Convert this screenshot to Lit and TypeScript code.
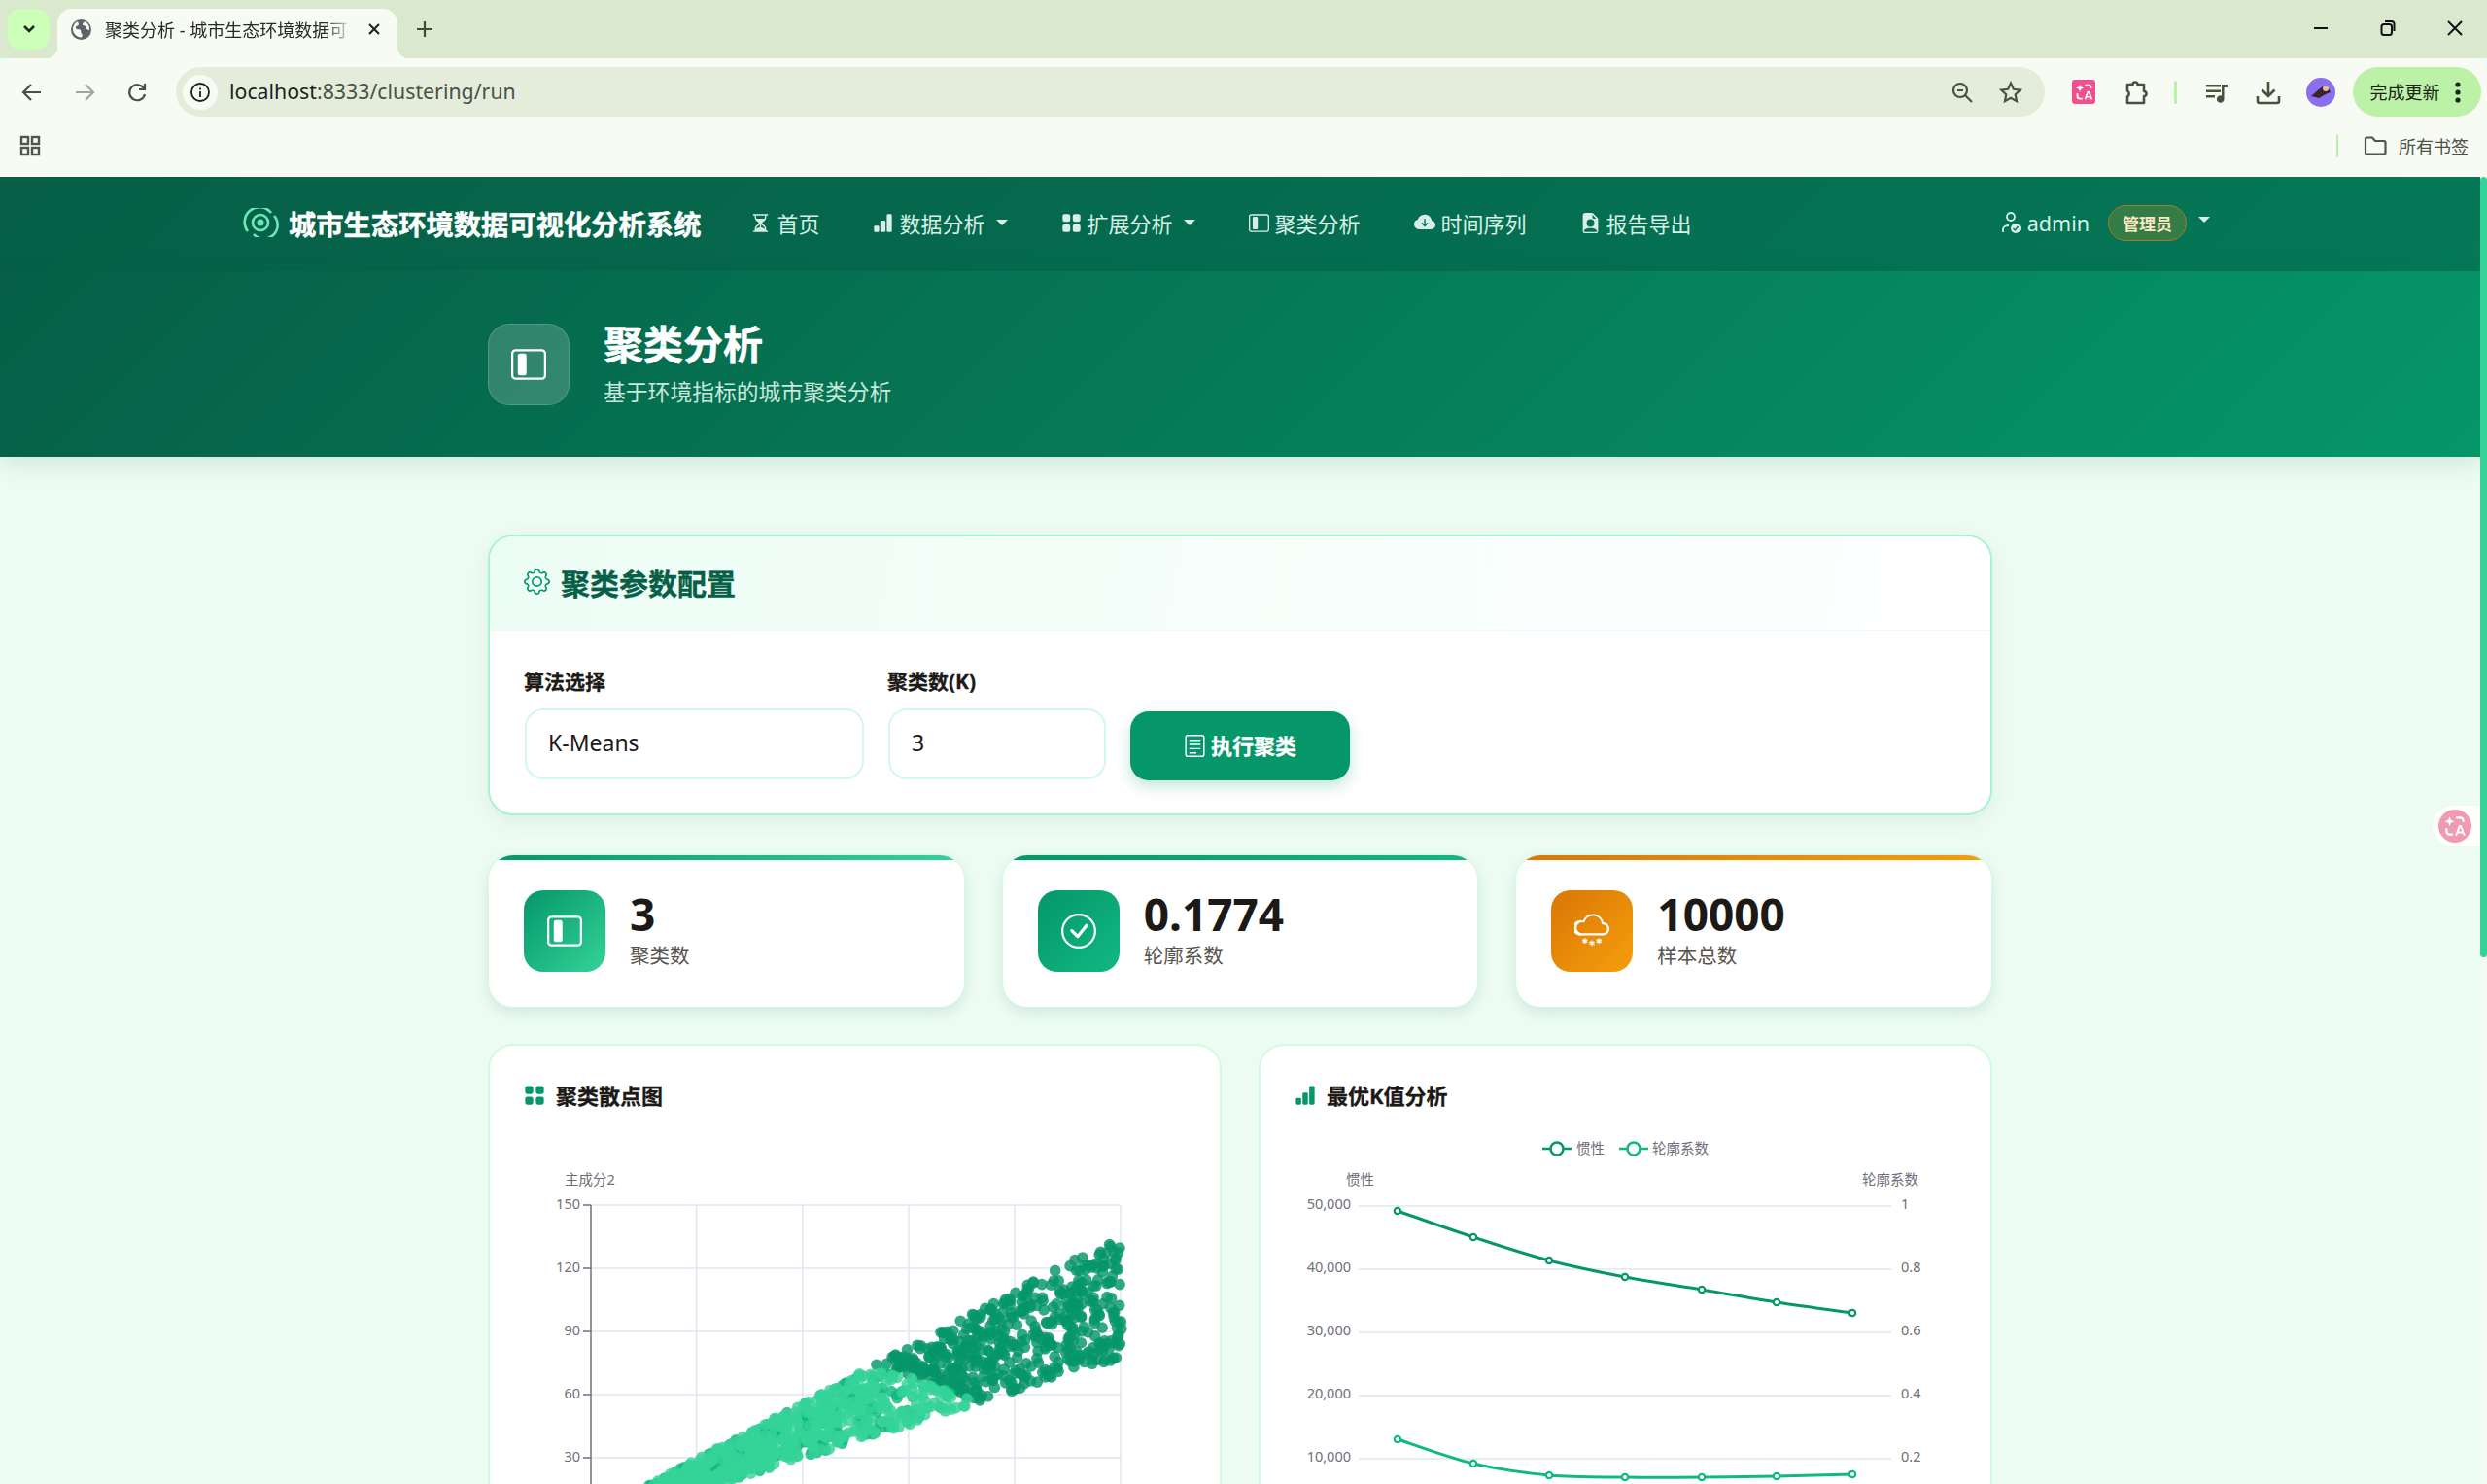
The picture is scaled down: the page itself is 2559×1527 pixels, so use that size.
import { LitElement, html, css, svg } from 'lit';
import { customElement } from 'lit/decorators.js';

const SIDEBAR = svg`<path d="M14 2a1 1 0 0 1 1 1v10a1 1 0 0 1-1 1H2a1 1 0 0 1-1-1V3a1 1 0 0 1 1-1zM2 1a2 2 0 0 0-2 2v10a2 2 0 0 0 2 2h12a2 2 0 0 0 2-2V3a2 2 0 0 0-2-2z"/><path d="M3 4a1 1 0 0 1 1-1h2a1 1 0 0 1 1 1v8a1 1 0 0 1-1 1H4a1 1 0 0 1-1-1z"/>`;
const HOURGLASS = svg`<path d="M2.5 15a.5.5 0 1 1 0-1h1v-1a4.5 4.5 0 0 1 2.557-4.06c.29-.139.443-.377.443-.59v-.7c0-.213-.154-.451-.443-.59A4.5 4.5 0 0 1 3.5 3V2h-1a.5.5 0 0 1 0-1h11a.5.5 0 0 1 0 1h-1v1a4.5 4.5 0 0 1-2.557 4.06c-.29.139-.443.377-.443.59v.7c0 .213.154.451.443.59A4.5 4.5 0 0 1 12.5 13v1h1a.5.5 0 0 1 0 1zm2-13v1c0 .537.12 1.045.337 1.5h6.326c.216-.455.337-.963.337-1.5V2zm3 6.35c0 .701-.478 1.236-1.011 1.492A3.5 3.5 0 0 0 4.5 13s.866-1.299 3-1.48zm1 0v3.17c2.134.181 3 1.48 3 1.48a3.5 3.5 0 0 0-1.989-3.158C8.978 9.586 8.5 9.052 8.5 8.351z"/>`;
const BARS = svg`<path d="M1 11a1 1 0 0 1 1-1h2a1 1 0 0 1 1 1v3a1 1 0 0 1-1 1H2a1 1 0 0 1-1-1zm5-4a1 1 0 0 1 1-1h2a1 1 0 0 1 1 1v7a1 1 0 0 1-1 1H7a1 1 0 0 1-1-1zm5-5a1 1 0 0 1 1-1h2a1 1 0 0 1 1 1v12a1 1 0 0 1-1 1h-2a1 1 0 0 1-1-1z"/>`;
const GRID = svg`<path d="M1 2.5A1.5 1.5 0 0 1 2.5 1h3A1.5 1.5 0 0 1 7 2.5v3A1.5 1.5 0 0 1 5.5 7h-3A1.5 1.5 0 0 1 1 5.5zm8 0A1.5 1.5 0 0 1 10.5 1h3A1.5 1.5 0 0 1 15 2.5v3A1.5 1.5 0 0 1 13.5 7h-3A1.5 1.5 0 0 1 9 5.5zm-8 8A1.5 1.5 0 0 1 2.5 9h3A1.5 1.5 0 0 1 7 10.5v3A1.5 1.5 0 0 1 5.5 15h-3A1.5 1.5 0 0 1 1 13.5zm8 0A1.5 1.5 0 0 1 10.5 9h3a1.5 1.5 0 0 1 1.5 1.5v3a1.5 1.5 0 0 1-1.5 1.5h-3A1.5 1.5 0 0 1 9 13.5z"/>`;
const CLOUD_DOWN = svg`<path d="M8 2a5.53 5.53 0 0 0-3.594 1.342c-.766.66-1.321 1.52-1.464 2.383C1.266 6.095 0 7.555 0 9.318 0 11.366 1.708 13 3.781 13h8.906C14.502 13 16 11.57 16 9.773c0-1.636-1.242-2.969-2.834-3.194C12.923 3.999 10.69 2 8 2m2.354 6.854-2 2a.5.5 0 0 1-.708 0l-2-2a.5.5 0 1 1 .708-.708L7.5 9.293V5.5a.5.5 0 0 1 1 0v3.793l1.146-1.147a.5.5 0 0 1 .708.708"/>`;
const FILE_PERSON = svg`<path d="M9.293 0H4a2 2 0 0 0-2 2v12a2 2 0 0 0 2 2h8a2 2 0 0 0 2-2V4.707A1 1 0 0 0 13.707 4L10 .293A1 1 0 0 0 9.293 0M9.5 3.5v-2l3 3h-2a1 1 0 0 1-1-1M11 8a3 3 0 1 1-6 0 3 3 0 0 1 6 0m2 5.755V14a1 1 0 0 1-1 1H4a1 1 0 0 1-1-1v-.245S4 12 8 12s5 1.755 5 1.755"/>`;
const GEAR = svg`<path d="M8 4.754a3.246 3.246 0 1 0 0 6.492 3.246 3.246 0 0 0 0-6.492M5.754 8a2.246 2.246 0 1 1 4.492 0 2.246 2.246 0 0 1-4.492 0"/><path d="M9.796 1.343c-.527-1.79-3.065-1.79-3.592 0l-.094.319a.873.873 0 0 1-1.255.52l-.292-.16c-1.64-.892-3.433.902-2.54 2.541l.159.292a.873.873 0 0 1-.52 1.255l-.319.094c-1.79.527-1.79 3.065 0 3.592l.319.094a.873.873 0 0 1 .52 1.255l-.16.292c-.892 1.64.901 3.434 2.541 2.54l.292-.159a.873.873 0 0 1 1.255.52l.094.319c.527 1.79 3.065 1.79 3.592 0l.094-.319a.873.873 0 0 1 1.255-.52l.292.16c1.64.893 3.434-.902 2.54-2.541l-.159-.292a.873.873 0 0 1 .52-1.255l.319-.094c1.79-.527 1.79-3.065 0-3.592l-.319-.094a.873.873 0 0 1-.52-1.255l.16-.292c.893-1.64-.902-3.433-2.541-2.54l-.292.159a.873.873 0 0 1-1.255-.52zm-2.633.283c.246-.835 1.428-.835 1.674 0l.094.319a1.873 1.873 0 0 0 2.693 1.115l.291-.16c.764-.415 1.6.42 1.184 1.185l-.159.292a1.873 1.873 0 0 0 1.116 2.692l.318.094c.835.246.835 1.428 0 1.674l-.319.094a1.873 1.873 0 0 0-1.115 2.693l.16.291c.415.764-.42 1.6-1.185 1.184l-.291-.159a1.873 1.873 0 0 0-2.693 1.116l-.094.318c-.246.835-1.428.835-1.674 0l-.094-.319a1.873 1.873 0 0 0-2.692-1.115l-.292.16c-.764.415-1.6-.42-1.184-1.185l.159-.291A1.873 1.873 0 0 0 1.945 8.93l-.319-.094c-.835-.246-.835-1.428 0-1.674l.319-.094A1.873 1.873 0 0 0 3.06 4.377l-.16-.292c-.415-.764.42-1.6 1.185-1.184l.292.159a1.873 1.873 0 0 0 2.692-1.115z"/>`;
const CHECK_CIRCLE = svg`<path d="M8 15A7 7 0 1 1 8 1a7 7 0 0 1 0 14m0 1A8 8 0 1 0 8 0a8 8 0 0 0 0 16"/><path d="M10.97 4.97a.235.235 0 0 0-.02.022L7.477 9.417 5.384 7.323a.75.75 0 0 0-1.06 1.06L6.97 11.03a.75.75 0 0 0 1.079-.02l3.992-4.99a.75.75 0 0 0-1.071-1.05"/>`;
const CLOUD_SNOW = svg`<path d="M13.405 4.277a5.001 5.001 0 0 0-9.499-1.004A3.5 3.5 0 1 0 3.5 10H13a3 3 0 0 0 .405-5.973M8.5 1a4 4 0 0 1 3.976 3.555.5.5 0 0 0 .5.445H13a2 2 0 0 1-.001 4H3.5a2.5 2.5 0 1 1 .605-4.926.5.5 0 0 0 .596-.329A4 4 0 0 1 8.5 1"/><path d="M4.5 11.2v.8l-.7-.4-.3.5.7.4-.7.4.3.5.7-.4v.8h.6v-.8l.7.4.3-.5-.7-.4.7-.4-.3-.5-.7.4v-.8zM7.7 12.2v.8l-.7-.4-.3.5.7.4-.7.4.3.5.7-.4v.8h.6v-.8l.7.4.3-.5-.7-.4.7-.4-.3-.5-.7.4v-.8zM10.9 11.2v.8l-.7-.4-.3.5.7.4-.7.4.3.5.7-.4v.8h.6v-.8l.7.4.3-.5-.7-.4.7-.4-.3-.5-.7.4v-.8z"/>`;
const DOC_LINES = svg`<path d="M3 0h10a2 2 0 0 1 2 2v12a2 2 0 0 1-2 2H3a2 2 0 0 1-2-2V2a2 2 0 0 1 2-2m0 1a1 1 0 0 0-1 1v12a1 1 0 0 0 1 1h10a1 1 0 0 0 1-1V2a1 1 0 0 0-1-1z"/><path d="M4 3.5h8v1H4zM4 6.5h8v1H4zM4 9.5h8v1H4zM4 12.5h5v1H4z"/>`;

function icon(body: unknown, size: number) {
  return html`<svg class="ic" width=${size} height=${size} viewBox="0 0 16 16" fill="currentColor">${body}</svg>`;
}

function translateGlyph(size: number) {
  return html`<svg width=${size} height=${size} viewBox="0 0 24 24" fill="none" stroke="#fff" stroke-width="2">
    <path d="M7 3l1.3 3.2L11.5 7.5 8.3 8.8 7 12 5.7 8.8 2.5 7.5l3.2-1.3z" fill="#fff" stroke="none" />
    <path d="M13 4h4a3 3 0 0 1 3 3v1" />
    <path d="M4 14v3a3 3 0 0 0 3 3h3" />
    <path d="M13 21l3.5-9h1l3.5 9M14.5 18h5" stroke-width="1.8" />
  </svg>`;
}

@customElement('browser-bar')
export class BrowserBar extends LitElement {
  static styles = css`
    :host {
      display: block;
      font-family: 'Noto Sans', 'Noto Sans CJK SC', sans-serif;
      color: #1f2a1c;
    }
    .strip {
      height: 60px;
      background: #dae8ce;
      display: flex;
      align-items: flex-end;
      position: relative;
    }
    .tab-list {
      width: 43px;
      height: 42px;
      margin: 0 8px 9px 8px;
      border-radius: 13px;
      background: #ccffb8;
      display: flex;
      align-items: center;
      justify-content: center;
    }
    .tab {
      position: relative;
      width: 350px;
      height: 51px;
      background: #f8fbf3;
      border-radius: 15px 15px 0 0;
      display: flex;
      align-items: center;
      box-sizing: border-box;
      padding: 0 17px 9px 14px;
      gap: 14px;
    }
    .tab::before,
    .tab::after {
      content: '';
      position: absolute;
      bottom: 0;
      width: 12px;
      height: 12px;
    }
    .tab::before {
      left: -12px;
      background: radial-gradient(circle at 0 0, transparent 12px, #f8fbf3 12.5px);
    }
    .tab::after {
      right: -12px;
      background: radial-gradient(circle at 100% 0, transparent 12px, #f8fbf3 12.5px);
    }
    .tab-title {
      flex: 1;
      font-size: 18px;
      white-space: nowrap;
      overflow: hidden;
      color: #262b24;
      -webkit-mask-image: linear-gradient(90deg, #000 88%, transparent);
      mask-image: linear-gradient(90deg, #000 88%, transparent);
    }
    .plus {
      margin: 0 0 9px 19px;
      height: 42px;
      display: flex;
      align-items: center;
    }
    .win {
      margin-left: auto;
      display: flex;
      align-self: flex-start;
      gap: 49px;
      padding: 19px 23px 0 0;
    }
    .toolbar {
      height: 60px;
      background: #f8fbf3;
      display: flex;
      align-items: flex-start;
      padding-top: 9px;
      box-sizing: border-box;
      border-radius: 14px 14px 0 0;
    }
    .nav-btns {
      width: 181px;
      height: 51px;
      display: flex;
      align-items: center;
      padding-left: 21px;
      gap: 30px;
      box-sizing: border-box;
    }
    .omni {
      width: 1923px;
      height: 51px;
      border-radius: 26px;
      background: #e4eddc;
      display: flex;
      align-items: center;
      padding: 0 23px 0 7px;
      box-sizing: border-box;
    }
    .info {
      width: 36px;
      height: 36px;
      border-radius: 50%;
      background: #f8fbf3;
      display: flex;
      align-items: center;
      justify-content: center;
      margin-right: 12px;
    }
    .url {
      font-size: 21.3px;
      color: #4a5146;
      flex: 1;
      padding-bottom: 2px;
    }
    .url b {
      font-weight: 400;
      color: #1c1f1a;
    }
    .omni-end {
      display: flex;
      gap: 26px;
      align-items: center;
    }
    .actions {
      display: flex;
      align-items: center;
      height: 51px;
      flex: 1;
      padding-left: 28px;
    }
    .actions > :nth-child(2) {
      margin-left: 30px;
    }
    .actions > :nth-child(3) {
      margin-left: 27px;
    }
    .actions > :nth-child(4) {
      margin-left: 29px;
    }
    .actions > :nth-child(5) {
      margin-left: 28px;
    }
    .actions > :nth-child(6) {
      margin-left: 26px;
    }
    .actions > :nth-child(7) {
      margin-left: 18px;
    }
    .pink {
      width: 24px;
      height: 25px;
      border-radius: 3px;
      background: #f0508f;
      display: flex;
      align-items: center;
      justify-content: center;
    }
    .sep {
      width: 2.5px;
      height: 24px;
      border-radius: 2px;
      background: #bcefa8;
    }
    .avatar {
      width: 30px;
      height: 30px;
      border-radius: 50%;
      background: #8a70ee;
      display: flex;
      align-items: center;
      justify-content: center;
    }
    .update {
      width: 132px;
      height: 51px;
      border-radius: 26px;
      background: #bcf1a8;
      display: flex;
      align-items: center;
      box-sizing: border-box;
      padding-left: 18px;
      font-size: 18px;
      color: #1a2416;
      gap: 15px;
    }
    .update span {
      padding-bottom: 2px;
    }
    .marks {
      height: 62px;
      background: #f8fbf3;
      display: flex;
      align-items: center;
      padding: 0 19px 2px 20px;
      box-sizing: border-box;
      font-size: 18px;
      color: #4b5049;
    }
    .marks .sep {
      margin-left: auto;
      margin-right: 26px;
    }
    .folder {
      margin-right: 12px;
      display: flex;
    }
    svg {
      display: block;
      flex: none;
    }
  `;

  render() {
    const stroke = '#46543f';
    return html`
      <div class="strip">
        <div class="tab-list">
          <svg width="14" height="10" viewBox="0 0 14 10" fill="none" stroke="#1f2a1c" stroke-width="2.6"><path d="M2 2l5 5 5-5" /></svg>
        </div>
        <div class="tab">
          <svg width="21" height="21" viewBox="0 0 16 16" fill="#5f6368"><path d="M8 0a8 8 0 1 0 0 16A8 8 0 0 0 8 0M5 1.800c.7.6 1.200 1.400 1 2.200-.2.900-1.400.900-2 1.600-.6.700-.2 1.600.6 2 .9.400 2-.2 2.800.5.700.6.300 1.600.6 2.500.3.800 1.200 1.300 1 2.200-.1.500-.4 1-.8 1.300A6.500 6.500 0 0 1 2 5.200 6.500 6.500 0 0 1 5 1.800m6-.1a6.500 6.500 0 0 1 3.300 7c-.7-.5-1.600-.8-2.200-1.500-.5-.6-.2-1.500-.8-2-.6-.6-1.800-.3-2.100-1.100-.3-.8.600-1.300 1-2 .2-.200.500-.300.800-.400z" /></svg>
          <span class="tab-title">聚类分析 - 城市生态环境数据可</span>
          <svg width="14" height="14" viewBox="0 0 14 14" stroke="#1f2a1c" stroke-width="2.2"><path d="M2 2l10 10M12 2L2 12" /></svg>
        </div>
        <div class="plus">
          <svg width="18" height="18" viewBox="0 0 18 18" stroke="#3f4a3a" stroke-width="2.2"><path d="M9 1v16M1 9h16" /></svg>
        </div>
        <div class="win">
          <svg width="20" height="20" viewBox="0 0 20 20" stroke="#111" stroke-width="2"><path d="M3 10h14" /></svg>
          <svg width="20" height="20" viewBox="0 0 20 20" fill="none" stroke="#111" stroke-width="2"><rect x="3.500" y="6" width="10.500" height="11" rx="2.500" /><path d="M7 3h6.500A3 3 0 0 1 16.500 6v7" /></svg>
          <svg width="20" height="20" viewBox="0 0 20 20" stroke="#111" stroke-width="2"><path d="M3 3l14 14M17 3L3 17" /></svg>
        </div>
      </div>
      <div class="toolbar">
        <div class="nav-btns">
          <svg width="24" height="24" viewBox="0 0 24 24" fill="none" stroke=${stroke} stroke-width="2.200"><path d="M21 12H4M11 4l-8 8 8 8" /></svg>
          <svg width="24" height="24" viewBox="0 0 24 24" fill="none" stroke="#a0a89b" stroke-width="2.200"><path d="M3 12h17M13 4l8 8-8 8" /></svg>
          <svg width="24" height="24" viewBox="0 0 24 24" fill="none" stroke=${stroke} stroke-width="2.200"><path d="M19 8a8 8 0 1 0 1 6" /><path d="M20 3v6h-6" /></svg>
        </div>
        <div class="omni">
          <div class="info">
            <svg width="22" height="22" viewBox="0 0 22 22" fill="none" stroke="#1c1f1a" stroke-width="1.800"><circle cx="11" cy="11" r="9" /><path d="M11 10v6M11 6.500v2" /></svg>
          </div>
          <span class="url"><b>localhost</b>:8333/clustering/run</span>
          <div class="omni-end">
            <svg width="24" height="24" viewBox="0 0 24 24" fill="none" stroke=${stroke} stroke-width="2.200"><circle cx="10" cy="10" r="7" /><path d="M15 15l7 7M7 10h6" /></svg>
            <svg width="24" height="24" viewBox="0 0 24 24" fill="none" stroke=${stroke} stroke-width="2.200"><path d="M12 2.500l2.900 6.300 6.800.8-5 4.700 1.300 6.800-6-3.400-6 3.400 1.300-6.800-5-4.700 6.800-.8z" /></svg>
          </div>
        </div>
        <div class="actions">
          <div class="pink">${translateGlyph(21)}</div>
          <svg width="24" height="28" viewBox="0 0 24 28" fill="none" stroke=${stroke} stroke-width="2.600"><path d="M3 6h5.500a2.500 2.500 0 0 1 5 0H20v7a2.500 2.500 0 0 1 0 5v7H3v-6.500a3.500 3.500 0 0 0 0-6z" stroke-linejoin="round" /></svg>
          <div class="sep"></div>
          <svg width="24" height="24" viewBox="0 0 24 24" fill=${stroke}><path d="M1 4h15v2.400H1zM1 9.500h15v2.400H1zM1 15h9v2.400H1zM17 4h6v3h-3.500v12a3.800 3.800 0 1 1-2.500-3.500z" /></svg>
          <svg width="26" height="26" viewBox="0 0 26 26" fill="none" stroke=${stroke} stroke-width="2.600"><path d="M13 2v15M6.500 10.500L13 17l6.500-6.500" /><path d="M2 17v5a2 2 0 0 0 2 2h18a2 2 0 0 0 2-2v-5" /></svg>
          <div class="avatar">
            <svg width="22" height="16" viewBox="0 0 22 16"><path d="M1 12l8-7 4-3 6 2 2 4-5 2-7 4z" fill="#3a2430" /><circle cx="16" cy="4" r="3" fill="#e8b9a8" /></svg>
          </div>
          <div class="update">
            <span>完成更新</span>
            <svg width="6" height="24" viewBox="0 0 6 24" fill="#1a2416"><circle cx="3" cy="4" r="2.600" /><circle cx="3" cy="12" r="2.600" /><circle cx="3" cy="20" r="2.600" /></svg>
          </div>
        </div>
      </div>
      <div class="marks">
        <svg width="22" height="22" viewBox="0 0 22 22" fill="none" stroke="#4f554b" stroke-width="2.400"><rect x="2" y="2" width="7" height="7" /><rect x="13" y="2" width="7" height="7" /><rect x="2" y="13" width="7" height="7" /><rect x="13" y="13" width="7" height="7" /></svg>
        <div class="sep"></div>
        <span class="folder"><svg width="24" height="20" viewBox="0 0 24 20" fill="none" stroke="#4f554b" stroke-width="2.200"><path d="M2 3a1.500 1.500 0 0 1 1.500-1.500H9L12 5h9a1.500 1.500 0 0 1 1.500 1.500V17a1.500 1.500 0 0 1-1.500 1.500H3.500A1.500 1.500 0 0 1 2 17z" /></svg></span>
        <span>所有书签</span>
      </div>
    `;
  }
}

// small seeded generator so the cloud of points stays the same on every load
function rng(seed: number) {
  return () => {
    seed = (seed + 0x6d2b79f5) | 0;
    let t = Math.imul(seed ^ (seed >>> 15), 1 | seed);
    t = (t + Math.imul(t ^ (t >>> 7), 61 | t)) ^ t;
    return ((t ^ (t >>> 14)) >>> 0) / 4294967296;
  };
}

function clusterPoints() {
  const r = rng(42);
  const dark: number[][] = [];
  const mid: number[][] = [];
  const light: number[][] = [];
  for (let i = 0; i < 1250; i++) {
    const x = 668 + 486 * Math.pow(r(), 1.1);
    const top = 1501 - 0.527 * (x - 718);
    const bottom = 1517 - 0.312 * (x - 771);
    const y = top + (bottom - top) * r();
    const edge = 1400 + (x - 885) * 0.34;
    if (y < edge) {
      dark.push([x, y]);
    } else if (r() < 0.33 || x > 995) {
      mid.push([x, y]);
    } else {
      light.push([x, y]);
    }
  }
  return { dark, mid, light };
}

function smooth(pts: number[][]) {
  let d = `M${pts[0][0]} ${pts[0][1]}`;
  for (let i = 0; i < pts.length - 1; i++) {
    const p0 = pts[Math.max(i - 1, 0)];
    const p1 = pts[i];
    const p2 = pts[i + 1];
    const p3 = pts[Math.min(i + 2, pts.length - 1)];
    const c1x = p1[0] + (p2[0] - p0[0]) / 6;
    const c1y = p1[1] + (p2[1] - p0[1]) / 6;
    const c2x = p2[0] - (p3[0] - p1[0]) / 6;
    const c2y = p2[1] - (p3[1] - p1[1]) / 6;
    d += `C${c1x} ${c1y} ${c2x} ${c2y} ${p2[0]} ${p2[1]}`;
  }
  return d;
}

const GRID_Y = [1240, 1305, 1370, 1435, 1500, 1565];

@customElement('app-root')
export class AppRoot extends LitElement {
  static styles = css`
    :host {
      display: flex;
      flex-direction: column;
      height: 1527px;
      overflow: hidden;
      position: relative;
      font-family: 'Noto Sans', 'Noto Sans CJK SC', sans-serif;
      color: #1c1917;
      background: #ecfdf5;
    }
    .viewport {
      flex: 1;
      display: flex;
      min-height: 0;
    }
    .page {
      flex: 1;
      min-width: 0;
      overflow: hidden;
      background: #edfcf3;
    }
    .scroll {
      width: 7px;
      background: #f2fbf6;
    }
    .thumb {
      height: 803px;
      border-radius: 4px;
      background: #34d399;
    }
    .float {
      position: absolute;
      left: 2503px;
      top: 829px;
      width: 49px;
      height: 42px;
      border-radius: 21px 0 0 21px;
      background: #fff;
      display: flex;
      align-items: center;
      padding-left: 6px;
      box-sizing: border-box;
    }
    .float span {
      width: 34px;
      height: 34px;
      border-radius: 50%;
      background: #ef9bb3;
      display: flex;
      align-items: center;
      justify-content: center;
    }
    nav {
      height: 97px;
      box-sizing: border-box;
      background: linear-gradient(135deg, #065f46, #047857);
      display: flex;
      align-items: center;
      padding: 0 278px 3px 249px;
      box-shadow: 0 2px 8px rgba(6, 95, 70, 0.2);
      position: relative;
      color: #d7efe6;
    }
    .brand {
      display: flex;
      align-items: center;
      gap: 10px;
      font-size: 28.3px;
      font-weight: 700;
      color: #fff;
      margin-right: 51px;
      white-space: nowrap;
      -webkit-text-stroke: 0.5px #fff;
    }
    .links {
      display: flex;
      align-items: center;
      gap: 55px;
      font-size: 22px;
    }
    .link {
      display: flex;
      align-items: center;
      gap: 6px;
      white-space: nowrap;
    }
    .caret {
      width: 0;
      height: 0;
      border-left: 6px solid transparent;
      border-right: 6px solid transparent;
      border-top: 6px solid #d7efe6;
      margin-left: 5px;
    }
    .user {
      margin-left: auto;
      display: flex;
      align-items: center;
      font-size: 21.5px;
    }
    .user .who {
      margin: 0 19px 0 6px;
    }
    .badge {
      width: 81px;
      height: 37px;
      box-sizing: border-box;
      border-radius: 19px;
      border: 1.500px solid #b4742c;
      background: rgba(245, 158, 11, 0.2);
      color: #fde8c4;
      font-size: 17px;
      font-weight: 700;
      display: flex;
      align-items: center;
      justify-content: center;
    }
    .user .caret {
      margin: -6px 0 0 12px;
    }
    .hero {
      height: 191px;
      background: linear-gradient(135deg, #065f46 0%, #059669 100%);
      box-shadow: 0 6px 24px rgba(6, 95, 70, 0.14);
      position: relative;
    }
    .wrap {
      width: 1548px;
      margin: 0 auto;
    }
    .hero .wrap {
      height: 100%;
      display: flex;
      align-items: center;
      gap: 35px;
      color: #fff;
    }
    .hero-ic {
      width: 84px;
      height: 84px;
      box-sizing: border-box;
      border-radius: 22px;
      background: rgba(255, 255, 255, 0.18);
      border: 1.500px solid rgba(255, 255, 255, 0.16);
      display: flex;
      align-items: center;
      justify-content: center;
    }
    h1 {
      margin: 0;
      font-size: 41px;
      line-height: 50px;
      font-weight: 700;
      -webkit-text-stroke: 0.6px #fff;
    }
    .hero p {
      margin: 9px 0 0;
      font-size: 22.8px;
      line-height: 32px;
      color: #c9e7dc;
    }
    .content {
      padding-top: 80px;
    }
    .cfg {
      height: 289px;
      box-sizing: border-box;
      border-radius: 26px;
      border: 2px solid #a7f3d0;
      background: #fff;
      overflow: hidden;
      box-shadow: 0 6px 20px rgba(6, 95, 70, 0.08);
    }
    .cfg-head {
      height: 97px;
      box-sizing: border-box;
      padding: 0 0 3px 35px;
      display: flex;
      align-items: center;
      gap: 11px;
      background: linear-gradient(100deg, #ecfdf5, #fff);
      border-bottom: 1px solid #eefbf4;
      color: #065f46;
      font-size: 30px;
      font-weight: 700;
      -webkit-text-stroke: 0.4px #065f46;
    }
    .cfg-head .ic {
      color: #059669;
      -webkit-text-stroke: 0;
    }
    .form {
      display: flex;
      align-items: flex-end;
      gap: 25px;
      padding: 36px 36px 0;
    }
    .field {
      display: flex;
      flex-direction: column;
      gap: 11px;
    }
    label {
      font-size: 21px;
      line-height: 33px;
      font-weight: 700;
      margin-left: -1px;
      -webkit-text-stroke: 0.3px #1c1917;
    }
    input {
      height: 73px;
      box-sizing: border-box;
      border-radius: 19px;
      border: 2.500px solid #d1fae5;
      background: #fff;
      padding: 0 22px 3px;
      font: 400 23px 'Noto Sans', 'Noto Sans CJK SC', sans-serif;
      color: #1c1917;
      outline: none;
    }
    .algo input {
      width: 349px;
    }
    .k input {
      width: 224px;
    }
    button {
      width: 226px;
      height: 71px;
      border: 0;
      border-radius: 19px;
      background: #059669;
      color: #fff;
      font: 700 22px 'Noto Sans', 'Noto Sans CJK SC', sans-serif;
      display: flex;
      align-items: center;
      justify-content: center;
      gap: 5px;
      box-shadow: 0 6px 16px rgba(5, 150, 105, 0.25);
      margin-bottom: -1px;
    }
    button span {
      padding-bottom: 3px;
      -webkit-text-stroke: 0.3px #fff;
    }
    .stats {
      display: grid;
      grid-template-columns: repeat(3, 1fr);
      gap: 38px;
      margin-top: 40px;
    }
    .stat {
      height: 158px;
      box-sizing: border-box;
      border-radius: 26px;
      background: #fff;
      border: 1.500px solid #d1fae5;
      display: flex;
      align-items: center;
      gap: 25px;
      padding-left: 36px;
      position: relative;
      overflow: hidden;
      box-shadow: 0 5px 14px rgba(6, 95, 70, 0.12);
    }
    .stat::before {
      content: '';
      position: absolute;
      left: 0;
      right: 0;
      top: 0;
      height: 5px;
      background: var(--bar);
    }
    .stat-ic {
      width: 84px;
      height: 84px;
      border-radius: 20px;
      color: #fff;
      display: flex;
      align-items: center;
      justify-content: center;
      background: var(--fill);
    }
    .stat-text {
      padding-bottom: 6px;
    }
    .val {
      font-size: 46px;
      line-height: 55px;
      font-weight: 700;
    }
    .lab {
      font-size: 20.500px;
      line-height: 30px;
      color: #57534e;
    }
    .charts {
      display: grid;
      grid-template-columns: repeat(2, 1fr);
      gap: 38px;
      margin-top: 37px;
    }
    .chart {
      height: 560px;
      box-sizing: border-box;
      border-radius: 26px;
      border: 2px solid #d1fae5;
      background: #fff;
    }
    .chart-title {
      display: flex;
      align-items: center;
      gap: 11px;
      height: 34px;
      margin: 34px 0 16px 35px;
      font-size: 22px;
      font-weight: 700;
      color: #1c1917;
    }
    .chart-title span {
      padding-bottom: 3px;
      -webkit-text-stroke: 0.3px #1c1917;
    }
    .chart-title .ic {
      color: #059669;
    }
    .chart > svg {
      display: block;
    }
    .chart text {
      font-family: 'Noto Sans', 'Noto Sans CJK SC', sans-serif;
      font-size: 14.500px;
      fill: #6e7079;
    }
  `;

  private points = clusterPoints();

  private scatter() {
    const xs = [608, 716.500, 826, 935, 1044, 1153];
    const { dark, mid, light } = this.points;
    const dots = (list: number[][], fill: string) =>
      list.map(p => svg`<circle cx=${p[0]} cy=${p[1]} r="5.800" fill=${fill} fill-opacity="0.82" />`);
    return html`<svg width="751" height="440" viewBox="504 1160 751 440">
      ${GRID_Y.map(y => svg`<line x1="608" x2="1153" y1=${y} y2=${y} stroke="#e0e6f1" stroke-width="1.500" />`)}
      ${xs.slice(1).map(x => svg`<line x1=${x} x2=${x} y1="1240" y2="1565" stroke="#e0e6f1" stroke-width="1.500" />`)}
      <line x1="608" x2="608" y1="1240" y2="1565" stroke="#6e7079" stroke-width="1.500" />
      ${GRID_Y.map(y => svg`<line x1="600" x2="608" y1=${y} y2=${y} stroke="#6e7079" stroke-width="1.500" />`)}
      ${['150', '120', '90', '60', '30'].map((t, i) => svg`<text x="597" y=${GRID_Y[i] + 4} text-anchor="end">${t}</text>`)}
      <text x="581" y="1219">主成分2</text>
      ${dots(dark, '#059669')}
      ${dots(mid, '#10b981')}
      ${dots(light, '#34d399')}
    </svg>`;
  }

  private kChart() {
    const xs = [1438, 1516, 1594, 1672, 1751, 1828, 1906];
    const inertia = [1246, 1273, 1297, 1314, 1327, 1340, 1351].map((y, i) => [xs[i], y]);
    const silhouette = [1481, 1506, 1518, 1520, 1520, 1519, 1517].map((y, i) => [xs[i], y]);
    const series = (pts: number[][], color: string) => svg`
      <path d=${smooth(pts)} fill="none" stroke=${color} stroke-width="3" />
      ${pts.map(p => svg`<circle cx=${p[0]} cy=${p[1]} r="3.200" fill="#fff" stroke=${color} stroke-width="2.200" />`)}`;
    const left = ['50,000', '40,000', '30,000', '20,000', '10,000'];
    const right = ['1', '0.8', '0.6', '0.4', '0.2'];
    const legend = (x: number, color: string) => svg`
      <path d="M${x} 1182h30" stroke=${color} stroke-width="2.500" />
      <circle cx=${x + 15} cy="1182" r="6.500" fill="#fff" stroke=${color} stroke-width="2.500" />`;
    return html`<svg width="751" height="440" viewBox="1297 1160 751 440">
      ${legend(1587, '#059669')}
      <text x="1622" y="1187">惯性</text>
      ${legend(1666, '#10b981')}
      <text x="1700" y="1187">轮廓系数</text>
      <text x="1385" y="1219">惯性</text>
      <text x="1916" y="1219">轮廓系数</text>
      ${GRID_Y.map(y => svg`<line x1="1398" x2="1946" y1=${y + 1} y2=${y + 1} stroke="#e0e6f1" stroke-width="1.500" />`)}
      ${left.map((t, i) => svg`<text x="1390" y=${GRID_Y[i] + 4} text-anchor="end">${t}</text>`)}
      ${right.map((t, i) => svg`<text x="1956" y=${GRID_Y[i] + 4}>${t}</text>`)}
      ${series(inertia, '#059669')}
      ${series(silhouette, '#10b981')}
    </svg>`;
  }

  render() {
    const stats = [
      { v: '3', l: '聚类数', i: SIDEBAR, bar: 'linear-gradient(90deg,#059669,#34d399)', fill: 'linear-gradient(135deg,#059669,#34d399)' },
      { v: '0.1774', l: '轮廓系数', i: CHECK_CIRCLE, bar: 'linear-gradient(90deg,#059669,#10b981)', fill: 'linear-gradient(135deg,#059669,#10b981)' },
      { v: '10000', l: '样本总数', i: CLOUD_SNOW, bar: 'linear-gradient(90deg,#d97706,#f59e0b)', fill: 'linear-gradient(135deg,#d97706,#f59e0b)' },
    ];
    return html`
      <browser-bar></browser-bar>
      <div class="viewport">
        <div class="page">
          <nav>
            <div class="brand">
              <svg width="38" height="30" viewBox="0 0 38 30" fill="none" stroke="#6ee7b7" stroke-width="2.600">
                <path d="M6 24A13 13 0 0 1 30 5" />
                <path d="M33 8A13 13 0 0 1 12 27" />
                <ellipse cx="19" cy="15" rx="8" ry="8" />
                <circle cx="19" cy="15" r="3.500" fill="#6ee7b7" stroke="none" />
              </svg>
              城市生态环境数据可视化分析系统
            </div>
            <div class="links">
              <span class="link">${icon(HOURGLASS, 21)}首页</span>
              <span class="link">${icon(BARS, 21)}数据分析<i class="caret"></i></span>
              <span class="link">${icon(GRID, 21)}扩展分析<i class="caret"></i></span>
              <span class="link">${icon(SIDEBAR, 21)}聚类分析</span>
              <span class="link">${icon(CLOUD_DOWN, 22)}时间序列</span>
              <span class="link">${icon(FILE_PERSON, 21)}报告导出</span>
            </div>
            <div class="user">
              <svg width="20" height="24" viewBox="0 0 20 24" fill="none" stroke="#d7efe6" stroke-width="1.800">
                <circle cx="9" cy="6" r="4" />
                <path d="M1 22v-3c0-2.500 3-4 6-4" />
                <circle cx="14" cy="18" r="5" fill="#d7efe6" stroke="none" />
                <path d="M11.500 18l2 2 3-4" stroke="#047857" stroke-width="1.400" />
              </svg>
              <span class="who">admin</span>
              <span class="badge">管理员</span>
              <i class="caret"></i>
            </div>
          </nav>
          <section class="hero">
            <div class="wrap">
              <div class="hero-ic">${icon(SIDEBAR, 36)}</div>
              <div>
                <h1>聚类分析</h1>
                <p>基于环境指标的城市聚类分析</p>
              </div>
            </div>
          </section>
          <div class="wrap content">
            <section class="cfg">
              <div class="cfg-head">${icon(GEAR, 27)}聚类参数配置</div>
              <div class="form">
                <div class="field algo">
                  <label>算法选择</label>
                  <input value="K-Means" readonly />
                </div>
                <div class="field k">
                  <label>聚类数(K)</label>
                  <input value="3" readonly />
                </div>
                <button>${icon(DOC_LINES, 23)}<span>执行聚类</span></button>
              </div>
            </section>
            <div class="stats">
              ${stats.map(
                s => html`<div class="stat" style="--bar:${s.bar};--fill:${s.fill}">
                  <div class="stat-ic">${icon(s.i, 36)}</div>
                  <div class="stat-text">
                    <div class="val">${s.v}</div>
                    <div class="lab">${s.l}</div>
                  </div>
                </div>`,
              )}
            </div>
            <div class="charts">
              <div class="chart">
                <div class="chart-title">${icon(GRID, 22)}<span>聚类散点图</span></div>
                ${this.scatter()}
              </div>
              <div class="chart">
                <div class="chart-title">${icon(BARS, 22)}<span>最优K值分析</span></div>
                ${this.kChart()}
              </div>
            </div>
          </div>
        </div>
        <div class="scroll"><div class="thumb"></div></div>
      </div>
      <div class="float"><span>${translateGlyph(26)}</span></div>
    `;
  }
}
